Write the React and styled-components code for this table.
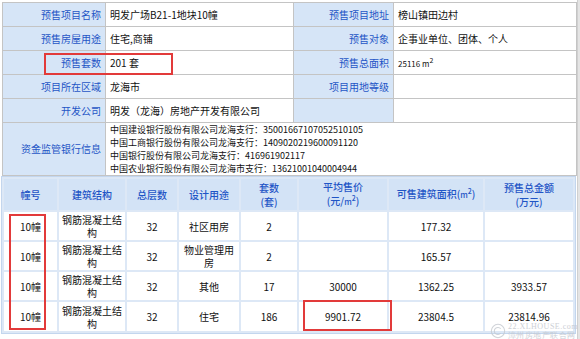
import React from 'react';
import styled, { createGlobalStyle } from 'styled-components';

// Presale permit info: a key/value table on top, a building table below

const GlobalStyle = createGlobalStyle`
    html, body {
        margin: 0;
        padding: 0;
        background: #fff;
    }
    body {
        font-family: "Noto Sans CJK SC", "Liberation Sans", sans-serif;
        font-size: 10px;
        color: #111;
    }
`;

const Page = styled.div`
    position: relative;
    width: 580px;
    height: 339px;
    overflow: hidden;
    display: flex;
`;

const Main = styled.div`
    width: 576px;
    padding: 2px 0 0 2px;
`;

const Edge = styled.div`
    width: 4px;
    background: #e4e4e4;
    border-left: 1px solid #d0d0d0;
`;

const InfoTable = styled.table`
    width: 574px;
    border-collapse: collapse;
    table-layout: fixed;
`;

const Col = styled.col`
    width: ${p => p.$w}px;
`;

const Label = styled.td`
    height: ${p => p.$h || 23}px;
    padding: 0 4px;
    border: 1px solid #c4c4c4;
    background: #d6e5f7;
    color: #1f55c6;
    text-align: right;
    white-space: nowrap;
    line-height: 12px;
`;

const Value = styled.td`
    height: ${p => p.$h || 23}px;
    padding: 0 4px;
    border: 1px solid #c4c4c4;
    background: #fff;
    color: #111;
    white-space: nowrap;
    line-height: 13px;
`;

const BankLine = styled.div`
    font-size: 9px;
    line-height: 13px;
`;

const Unit = styled.span`
    font-size: 8px;
`;

const Sup = styled.span`
    font-size: 7px;
    vertical-align: top;
    line-height: 9px;
`;

const BuildTable = styled.table`
    width: 575px;
    margin-left: -1px;
    border-collapse: separate;
    border-spacing: 2px;
    table-layout: fixed;
    background: #dde8f6;
    border: 1px solid #c3d6ee;
`;

const Head = styled.th`
    height: 31px;
    padding: 0 2px;
    background: #d3e3f6;
    color: #1f55c6;
    font-weight: 500;
    text-align: center;
    line-height: 14px;
`;

const Cell = styled.td`
    height: ${p => p.$h || 28}px;
    padding: 0 3px;
    background: #fff;
    text-align: center;
    line-height: 13px;
    color: #111;
`;

const Mark = styled.div`
    position: absolute;
    left: ${p => p.$x}px;
    top: ${p => p.$y}px;
    width: ${p => p.$w}px;
    height: ${p => p.$h}px;
    box-sizing: border-box;
    border: 2px solid #e23a3a;
    pointer-events: none;
`;

const Watermark = styled.div`
    position: absolute;
    right: 2px;
    bottom: -1px;
    display: flex;
    align-items: center;
    gap: 2px;
    color: #c4c8cf;
    font-family: "Liberation Serif", serif;
    opacity: 0.85;
`;

const WaterText = styled.div`
    display: flex;
    flex-direction: column;
    font-size: 8px;
    line-height: 9px;
    letter-spacing: 0.5px;
`;

const info = [
    ['预售项目名称', '明发广场B21-1地块10幢', '预售项目地址', '榜山镇田边村'],
    ['预售房屋用途', '住宅,商铺', '预售对象', '企事业单位、团体、个人'],
    ['预售套数', '201 套', '预售总面积', 'area'],
    ['项目所在区域', '龙海市', '项目用地等级', ''],
    ['开发公司', '明发（龙海）房地产开发有限公司', '', ''],
];

const banks = [
    '中国建设银行股份有限公司龙海支行：35001667107052510105',
    '中国工商银行股份有限公司龙海支行：1409020219600091120',
    '中国银行股份有限公司龙海支行：416961902117',
    '中国农业银行股份有限公司龙海市支行：13621001040004944',
];

const rows = [
    { use: '社区用房', sets: '2', price: '', area: '177.32', total: '' },
    { use: '物业管理用房', sets: '2', price: '', area: '165.57', total: '' },
    { use: '其他', sets: '17', price: '30000', area: '1362.25', total: '3933.57' },
    { use: '住宅', sets: '186', price: '9901.72', area: '23804.5', total: '23814.96' },
];

const widths = [53, 66, 50, 60, 56, 88, 94, 88];

export default function App() {
    return (
        <>
            <GlobalStyle />
            <Page>
                <Main>
                    <InfoTable>
                        <colgroup>
                            <Col $w={103} />
                            <Col $w={188} />
                            <Col $w={100} />
                            <Col $w={183} />
                        </colgroup>
                        <tbody>
                            {info.map((r, i) => (
                                <tr key={i}>
                                    <Label>{r[0]}</Label>
                                    <Value>{r[1]}</Value>
                                    <Label>{r[2]}</Label>
                                    <Value>
                                        {r[3] === 'area'
                                            ? <Unit>25116 m<Sup>2</Sup></Unit>
                                            : r[3]}
                                    </Value>
                                </tr>
                            ))}
                            <tr>
                                <Label $h={51}>资金监管银行信息</Label>
                                <Value $h={51} colSpan={3}>
                                    {banks.map(b => <BankLine key={b}>{b}</BankLine>)}
                                </Value>
                            </tr>
                        </tbody>
                    </InfoTable>
                    <BuildTable>
                        <colgroup>
                            {widths.map((w, i) => <Col key={i} $w={w} />)}
                        </colgroup>
                        <thead>
                            <tr>
                                <Head>幢号</Head>
                                <Head>建筑结构</Head>
                                <Head>总层数</Head>
                                <Head>设计用途</Head>
                                <Head>套数<br />(套)</Head>
                                <Head>平均售价<br />(元/<Unit>m</Unit><Sup>2</Sup>)</Head>
                                <Head>可售建筑面积(<Unit>m</Unit><Sup>2</Sup>)</Head>
                                <Head>预售总金额<br />(万元)</Head>
                            </tr>
                        </thead>
                        <tbody>
                            {rows.map((r, i) => (
                                <tr key={i}>
                                    <Cell $h={i === 3 ? 29 : 28}>10幢</Cell>
                                    <Cell>钢筋混凝土结构</Cell>
                                    <Cell>32</Cell>
                                    <Cell>{r.use}</Cell>
                                    <Cell>{r.sets}</Cell>
                                    <Cell>{r.price}</Cell>
                                    <Cell>{r.area}</Cell>
                                    <Cell>{r.total}</Cell>
                                </tr>
                            ))}
                        </tbody>
                    </BuildTable>
                </Main>
                <Edge />
                <Mark $x={44} $y={53} $w={129} $h={22} />
                <Mark $x={9} $y={214} $w={37} $h={116} />
                <Mark $x={303} $y={300} $w={89} $h={31} />
                <Watermark>
                    <svg width="16" height="16" viewBox="0 0 18 18">
                        <circle cx="9" cy="9" r="7.5" fill="none" stroke="#c8ccd2" strokeWidth="1.2" />
                        <path d="M12 6.5a4 4 0 1 0 0 5" fill="none" stroke="#c8ccd2" strokeWidth="1.2" />
                    </svg>
                    <WaterText>
                        <span>22.XLHOUSE.com</span>
                        <span>漳州房地产联合网</span>
                    </WaterText>
                </Watermark>
            </Page>
        </>
    );
}
